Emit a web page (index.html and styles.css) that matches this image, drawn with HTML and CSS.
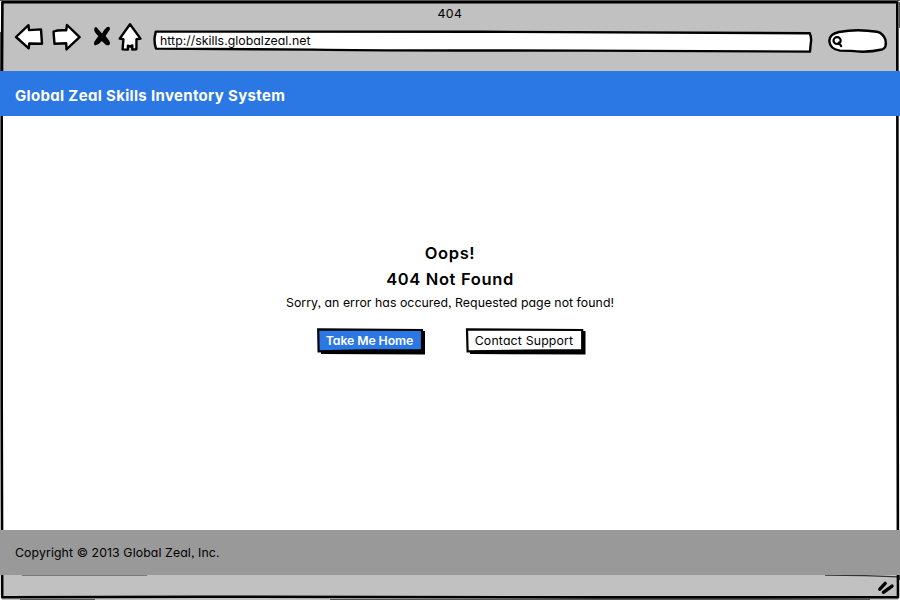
FILE: index.html
```html
<!DOCTYPE html>
<html lang="en">
<head>
<meta charset="utf-8">
<title>404</title>
<link rel="stylesheet" href="styles.css">
</head>
<body>
<div class="window">
  <svg class="frame" viewBox="0 0 900 600" aria-hidden="true">
    <path class="edge-soft" d="M0 .5H900M.5 32V105M899.5 2V28M899.5 560V580M20 599.5H95M330 599.5H870"/>
    <path class="edge" d="M2.4 2.3L300 2.3L897.3 2.3L897.5 300L898 597.3L600 597.4L200 596.7L2.2 597.2L1.7 400L1.7 120Z"/>
  </svg>
  <header class="chrome">
    <div class="title">404</div>
    <div class="toolbar">
      <svg class="nav back" viewBox="0 0 30 30"><path d="M2 15L14.5 3.2L15 8.1L27 7.4L28 21.7L15.3 21.5L14.7 26.3Z"/></svg>
      <svg class="nav forward" viewBox="0 0 30 30"><path d="M2.5 9.5Q7 7.8 15.2 8.3L16 3L28.6 15.2L15.5 27.4L15.2 21.3L3.5 21.8Z"/></svg>
      <svg class="nav stop" viewBox="0 0 20 30"><path class="solid" d="M4.5 5.2Q7 8 10 11.5Q12 7.5 14.7 5.2Q18.5 3.6 17.8 7.8Q15.5 11 13.6 14Q17 18 18 20.5Q18 24.7 13.7 22.7L9.8 18.9Q7 22.5 3 23.4Q.6 21.7 3.4 18.3L6.4 14Q1.5 9.5 2.2 6.7Q3 4.2 4.5 5.2Z"/></svg>
      <svg class="nav home" viewBox="0 0 26 30"><path d="M13 2.3L2.7 16.6L6.4 17.3L5.6 27.4L10.9 27.6V23.6L13 24.6L15.3 23.4V27.6L19.4 27.2L19.5 17.3L23.5 16.6Z"/></svg>
      <div class="address">
        <svg class="outline" viewBox="0 0 660 24"><path d="M2.8 2.6L330 2.8Q500 3.6 656.8 4.2Q658.8 9 657.8 14L657 22.6L430 21.6Q220 21.6 160 20.6L3 19.6Q1 14 1.7 8Z"/></svg>
        <span>http://skills.globalzeal.net</span>
      </div>
      <svg class="search" viewBox="0 0 62 28"><path d="M2.3 14Q2.2 7 12 5Q30 1.5 50 4.8Q56 6 58.5 13Q60 21 55 22.5Q40 26 24 23.9L13 23.6Q2.8 22 2.3 14Z"/><path class="lens" d="M13.7 13.6A3.6 3.4 0 1 0 6.5 13.6A3.6 3.4 0 1 0 13.7 13.6M11.6 15.6L14.2 19.2"/></svg>
    </div>
  </header>
  <div class="brand">Global Zeal Skills Inventory System</div>
  <main class="content">
    <h1>Oops!</h1>
    <h2>404 Not Found</h2>
    <p>Sorry, an error has occured, Requested page not found!</p>
    <div class="actions">
      <a class="button primary"><svg class="plate" viewBox="0 0 110 28" preserveAspectRatio="none"><path class="shade" d="M5 3L109 4V27.5L5 27Z"/><path class="face" d="M2.2 2.4L106 3V23.2L50 23.3L2.6 24.3Z"/></svg><span>Take Me Home</span></a>
      <a class="button support"><svg class="plate" viewBox="0 0 121 28" preserveAspectRatio="none"><path class="shade" d="M5 3L120.5 4V27.5L5 27Z"/><path class="face" d="M2 2.4L117.2 3V23.2L60 23.7L2.6 24.3Z"/></svg><span>Contact Support</span></a>
    </div>
  </main>
  <footer class="copyright">Copyright © 2013 Global Zeal, Inc.</footer>
  <div class="status">
    <svg class="rule" viewBox="0 0 900 5"><path d="M22 -.2H147M825 .2L865 .7L898 1.8"/></svg>
    <svg class="grip" viewBox="0 0 20 18"><path d="M4.8 10.2L10.2 4.4M8.4 13.3L17 7.1"/></svg>
  </div>
</div>
</body>
</html>
```
FILE: styles.css
```css
* { box-sizing: border-box; }
body { margin: 0; background: #fff; color: #000; font: 12.3px/20px Inter, "Noto Sans", sans-serif; font-feature-settings: "cv11", "ss03"; }
.window { position: relative; display: flex; flex-direction: column; width: 900px; height: 600px; overflow: hidden; }
.frame { position: absolute; inset: 0; width: 900px; height: 600px; z-index: 1; pointer-events: none; }
.frame path { fill: none; }
.edge { stroke: #000; stroke-width: 2.6; stroke-linejoin: round; }
.edge-soft { stroke: #555; stroke-width: 1; }
.chrome, .status { margin: 0 2px; background: #c1c1c1; }
.chrome { height: 71px; padding-top: 4px; }
.title { height: 19px; text-align: center; letter-spacing: .5px; }
.toolbar { display: flex; align-items: flex-start; padding-left: 12px; }
.nav { height: 30px; margin-top: -1px; fill: #fff; stroke: #000; stroke-width: 2.4; stroke-linejoin: round; flex: none; }
.back { width: 30px; margin-right: 7px; }
.forward { width: 30px; margin-right: 11px; }
.stop { width: 20px; margin-right: 5px; }
.home { width: 26px; margin-right: 10px; }
.solid { fill: #000; stroke: none; }
.address { position: relative; width: 660px; height: 24px; margin: 6px 13.5px 0 0; padding: 2px 0 0 7px; }
.outline, .plate { position: absolute; inset: 0; width: 100%; height: 100%; }
.outline, .search { fill: #fff; stroke: #000; stroke-width: 2.4; stroke-linejoin: round; }
.address span, .button span { position: relative; }
.address span { letter-spacing: .04px; }
.search { width: 62px; height: 28px; margin-top: 4px; flex: none; }
.lens { fill: none; stroke-width: 2.2; stroke-linecap: round; }
.brand, .copyright { position: relative; z-index: 2; padding-left: 15px; flex: none; }
.brand { height: 44.5px; line-height: 49px; background: #2b78e4; color: #fff; font-size: 15px; font-weight: 700; letter-spacing: .33px; }
.content { flex: 1; text-align: center; padding-top: 124.5px; }
h1, h2, p { margin: 0; }
h1, h2 { font-size: 16.5px; line-height: 26px; font-weight: 600; letter-spacing: .65px; }
p { line-height: 22px; letter-spacing: .04px; }
.actions { display: flex; gap: 39px; padding: 12.5px 0 0 316px; }
.button { position: relative; height: 28px; line-height: 27px; }
.primary { width: 110px; padding-right: 3px; color: #fff; font-weight: 600; letter-spacing: -.1px; }
.support { width: 121px; padding-right: 3px; letter-spacing: .17px; }
.face { fill: #fff; stroke: #000; stroke-width: 2.2; }
.primary .face { fill: #2b78e4; }
.copyright { height: 44.5px; line-height: 45px; background: #999; letter-spacing: .1px; }
.status { position: relative; height: 25.5px; flex: none; display: flex; justify-content: flex-end; padding-right: 3px; }
.rule { position: absolute; left: -2px; top: 0; width: 900px; height: 5px; fill: none; stroke: #333; stroke-width: 1.3; }
.grip { width: 20px; height: 18px; margin-top: 4px; fill: none; stroke: #000; stroke-width: 3.4; stroke-linecap: round; }
```
